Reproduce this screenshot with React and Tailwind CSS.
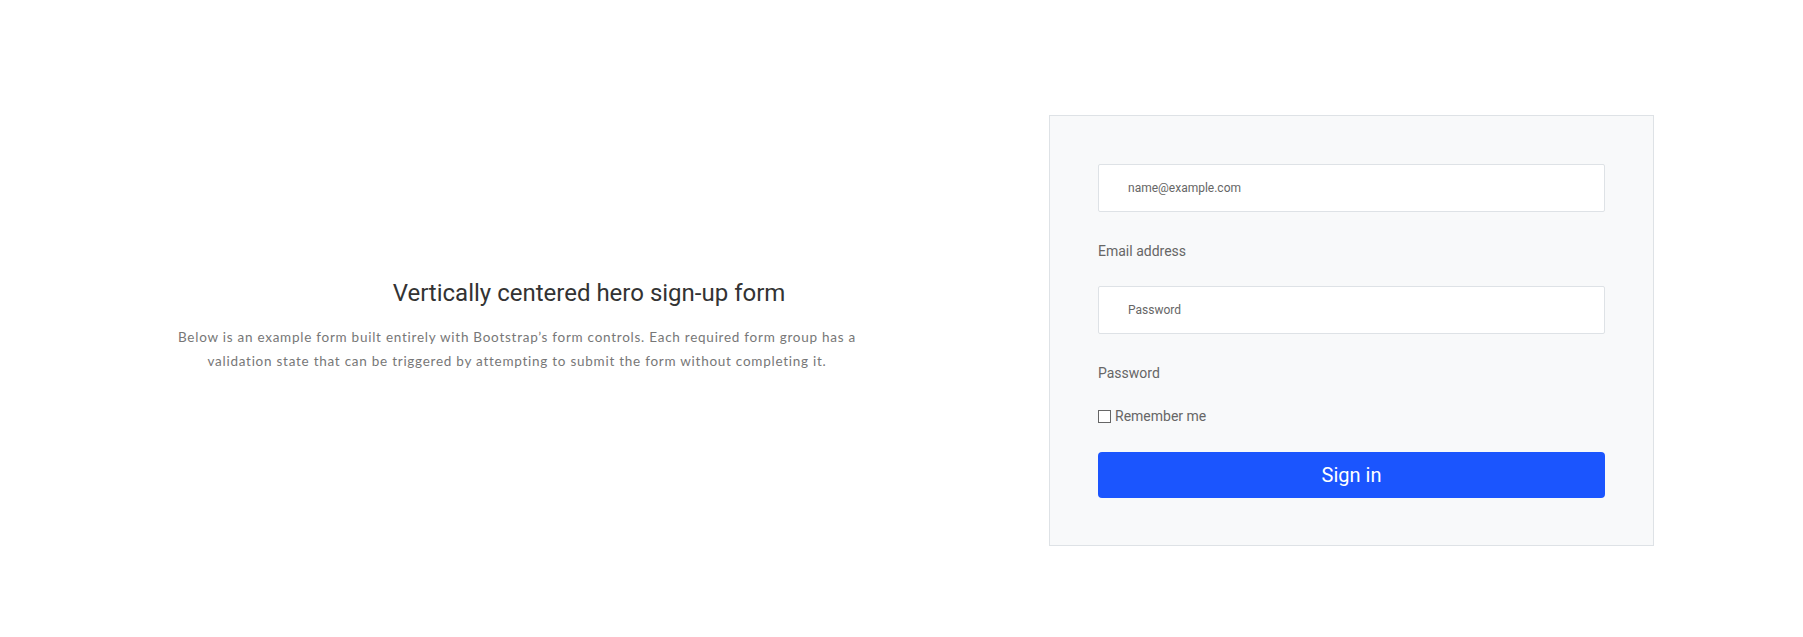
export default function App() {
  return (
    <div className="w-[1803px] h-[637px] bg-white flex items-start font-['Roboto',sans-serif]">
      {/* Hero text */}
      <div className="w-[1049px] pt-[278px] flex flex-col items-start">
        <h1 className="ml-[293px] w-[592px] text-center text-[24px] leading-[30px] text-[#333] font-normal">
          Vertically centered hero sign-up form
        </h1>
        <p className="ml-[140px] mt-[17px] w-[754px] text-center text-[13.5px] leading-[24px] tracking-[0.055em] text-[#777] font-['Lato','Open_Sans',sans-serif]">
          Below is an example form built entirely with Bootstrap’s form controls. Each required form group has a
          <br />
          validation state that can be triggered by attempting to submit the form without completing it.
        </p>
      </div>

      {/* Sign-in card */}
      <div className="mt-[115px] w-[605px] h-[431px] bg-[#f8f9fa] border border-[#dee2e6] px-[48px] pt-[48px] flex flex-col">
        <div className="h-[48px] bg-white border border-[#dee2e6] rounded-[2px] flex items-center pl-[29px] text-[12px] text-[#666]">
          name@example.com
        </div>
        <label className="mt-[29px] h-[20px] leading-[20px] text-[14px] text-[#666]">Email address</label>
        <div className="mt-[25px] h-[48px] bg-white border border-[#dee2e6] rounded-[2px] flex items-center pl-[29px] text-[12px] text-[#666]">
          Password
        </div>
        <label className="mt-[29px] h-[20px] leading-[20px] text-[14px] text-[#666]">Password</label>
        <div className="mt-[23px] h-[20px] flex items-center text-[14px] text-[#666]">
          <span className="w-[13px] h-[13px] border border-[#666] bg-white mr-[4px]" />
          Remember me
        </div>
        <button className="mt-[26px] h-[46px] w-full rounded-[4px] bg-[#1b55fe] text-white text-[20px] font-normal">
          Sign in
        </button>
      </div>
    </div>
  );
}
